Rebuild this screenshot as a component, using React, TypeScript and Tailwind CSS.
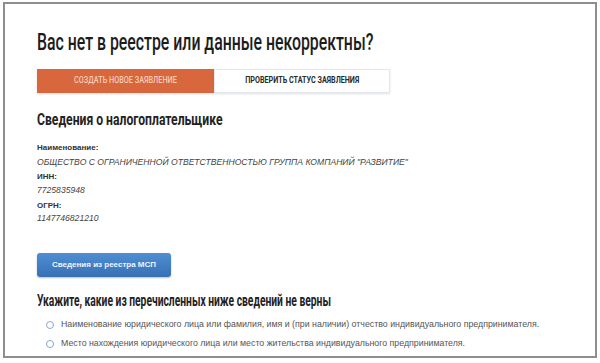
import React from "react";

const roboto = { fontFamily: "Roboto, 'Liberation Sans', sans-serif" } as React.CSSProperties;

export default function App() {
  return (
    <div className="w-[600px] h-[363px] bg-white pt-[2px] pl-[3px]" style={{ fontFamily: "'Liberation Sans', Arial, sans-serif" }}>
      <div className="w-[594px] h-[356px] border-2 border-[#8e8e8e] bg-white pl-[32px] flex flex-col">
        <h1 className="mt-[24px] h-[28px] text-[24px] leading-[28px] text-[#1c1c1c] font-medium" style={roboto}>
          <span className="inline-block whitespace-nowrap origin-left scale-x-[0.66]">Вас нет в реестре или данные некорректны?</span>
        </h1>
        <div className="mt-[13px] flex h-[24px] w-[353px] shadow-[0_1px_2px_rgba(0,0,0,0.12)]">
          <div className="w-[177px] bg-[#d8673e] flex items-center justify-center text-[9px] font-medium text-[#f6cdb9] uppercase" style={roboto}>
            <span className="inline-block whitespace-nowrap scale-x-[0.81]">Создать новое заявление</span>
          </div>
          <div className="flex-1 bg-white border border-[#e3e8ef] flex items-center justify-center text-[9px] font-bold text-[#2a2a2a] uppercase" style={roboto}>
            <span className="inline-block whitespace-nowrap scale-x-[0.8]">Проверить статус заявления</span>
          </div>
        </div>
        <h2 className="mt-[17px] h-[20px] text-[16px] leading-[20px] text-[#222] font-bold" style={roboto}>
          <span className="inline-block whitespace-nowrap origin-left scale-x-[0.76]">Сведения о налогоплательщике</span>
        </h2>
        <div className="mt-[12px] text-[8px] leading-[12px] font-bold text-[#333]">Наименование:</div>
        <div className="mt-[2px] text-[8.6px] leading-[12px] italic text-[#444]">
          ОБЩЕСТВО С ОГРАНИЧЕННОЙ ОТВЕТСТВЕННОСТЬЮ ГРУППА КОМПАНИЙ "РАЗВИТИЕ"
        </div>
        <div className="mt-[3px] text-[8px] leading-[12px] font-bold text-[#333]">ИНН:</div>
        <div className="mt-[1px] text-[8.6px] leading-[12px] italic text-[#444]">7725835948</div>
        <div className="mt-[4px] text-[8px] leading-[12px] font-bold text-[#333]">ОГРН:</div>
        <div className="mt-[0px] text-[8.6px] leading-[12px] italic text-[#444]">1147746821210</div>
        <div className="mt-[26px]">
          <button className="w-[134px] h-[24px] rounded-[3px] bg-gradient-to-b from-[#4f8ed4] to-[#3870b4] text-[#eef4fb] text-[8px] font-bold shadow-[0_1px_2px_rgba(0,0,0,0.25)]">
            Сведения из реестра МСП
          </button>
        </div>
        <h2 className="mt-[14px] h-[20px] text-[16px] leading-[20px] text-[#222] font-bold" style={roboto}>
          <span className="inline-block whitespace-nowrap origin-left scale-x-[0.643]">Укажите, какие из перечисленных ниже сведений не верны</span>
        </h2>
        <div className="mt-[8px] flex flex-col gap-[7px] pl-[9px]">
          <label className="flex items-center gap-[7px] h-[12px]">
            <span className="w-[8px] h-[8px] rounded-full border border-[#8aa8cc]" />
            <span className="text-[8.8px] text-[#555] whitespace-nowrap">
              Наименование юридического лица или фамилия, имя и (при наличии) отчество индивидуального предпринимателя.
            </span>
          </label>
          <label className="flex items-center gap-[7px] h-[12px]">
            <span className="w-[8px] h-[8px] rounded-full border border-[#8aa8cc]" />
            <span className="text-[8.8px] text-[#555] whitespace-nowrap">
              Место нахождения юридического лица или место жительства индивидуального предпринимателя.
            </span>
          </label>
        </div>
      </div>
    </div>
  );
}
